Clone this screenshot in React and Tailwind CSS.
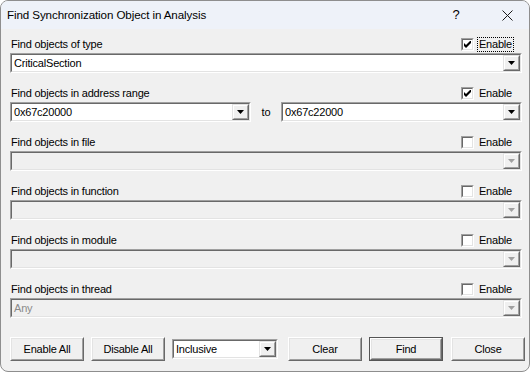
import React from 'react';

const FONT = { fontFamily: '"Liberation Sans", Arial, sans-serif' };

const Arrow = ({ disabled }) => (
  <svg width="7" height="4" viewBox="0 0 7 4">
    <path d="M0 0h7L3.5 4z" fill={disabled ? '#a0a0a0' : '#000'} />
  </svg>
);

// sunken 3D field with a raised drop button on the right
const Combo = ({ value, disabled, className = '' }) => (
  <div className={`flex h-[20px] border-t border-l border-t-[#a0a0a0] border-l-[#a0a0a0] border-b border-r border-b-white border-r-white ${className}`}>
    <div
      className={`flex flex-1 border-t border-l border-t-[#696969] border-l-[#696969] border-b border-r border-b-[#e3e3e3] border-r-[#e3e3e3] ${
        disabled ? 'bg-[#f0f0f0]' : 'bg-white'
      }`}
    >
      <div className={`flex-1 flex items-center pl-[2px] text-[11px] tracking-[-0.2px] ${disabled ? 'text-[#8a8a8a]' : 'text-black'}`}>
        {value}
      </div>
      <div className="w-[17px] flex border-t border-l border-t-[#e3e3e3] border-l-[#e3e3e3] border-b border-r border-b-[#696969] border-r-[#696969]">
        <div className="flex-1 flex items-center justify-center bg-[#f0f0f0] border-t border-l border-t-white border-l-white border-b border-r border-b-[#a0a0a0] border-r-[#a0a0a0]">
          <Arrow disabled={disabled} />
        </div>
      </div>
    </div>
  </div>
);

const Check = ({ checked }) => (
  <div className="w-[13px] h-[13px] flex border-t border-l border-t-[#a0a0a0] border-l-[#a0a0a0] border-b border-r border-b-white border-r-white">
    <div className="flex-1 flex items-center justify-center bg-white border-t border-l border-t-[#696969] border-l-[#696969] border-b border-r border-b-[#e3e3e3] border-r-[#e3e3e3]">
      {checked && (
        <svg width="7" height="7" viewBox="0 0 7 7">
          <path d="M0 2v3l2 2 5-5V-1L2 4z" fill="#000" />
        </svg>
      )}
    </div>
  </div>
);

const Section = ({ label, checked, focused, first, children }) => (
  <div className={first ? 'mt-[7px]' : 'mt-[12px]'}>
    <div className="h-[16px] flex items-center w-[512px]">
      <span className="flex-1 text-[11px] tracking-[-0.2px] pl-[1px]">{label}</span>
      <Check checked={checked} />
      <span
        className={`ml-[3px] mr-[8px] px-[1px] text-[11px] tracking-[-0.2px] leading-[13px] border border-dotted ${
          focused ? 'border-black' : 'border-transparent'
        }`}
      >
        Enable
      </span>
    </div>
    <div className="mt-[1px]">{children}</div>
  </div>
);

const Button = ({ children, isDefault, className = '' }) => (
  <div className={`h-[24px] flex ${isDefault ? 'border border-[#555555]' : ''} ${className}`}>
    <div className="flex-1 flex border-t border-l border-t-white border-l-white border-b border-r border-b-[#696969] border-r-[#696969]">
      <div className="flex-1 flex items-center justify-center bg-[#f0f0f0] text-[11px] tracking-[-0.2px] border-t border-l border-t-[#e3e3e3] border-l-[#e3e3e3] border-b border-r border-b-[#a0a0a0] border-r-[#a0a0a0]">
        {children}
      </div>
    </div>
  </div>
);

export default function App() {
  return (
    <div style={FONT} className="w-[530px] h-[372px] flex flex-col bg-[#f0f0f0] border border-[#8e8e8e] rounded-[8px] overflow-hidden text-black">
      <div className="h-[28px] shrink-0 flex items-center bg-[#eef2f9]">
        <span className="pl-[6px] flex-1 text-[11.6px] tracking-[-0.1px]">Find Synchronization Object in Analysis</span>
        <span className="text-[13px] w-[12px] text-center">?</span>
        <div className="ml-[40px] mr-[16px] w-[11px] h-[11px]">
          <svg width="11" height="11" viewBox="0 0 11 11">
            <path d="M0.5 0.5l10 10M10.5 0.5l-10 10" stroke="#1a1a1a" strokeWidth="1" />
          </svg>
        </div>
      </div>

      <div className="flex-1 flex flex-col pl-[9px]">
        <Section first label="Find objects of type" checked focused>
          <Combo value="CriticalSection" className="w-[512px]" />
        </Section>

        <Section label="Find objects in address range" checked>
          <div className="flex items-center w-[512px]">
            <Combo value="0x67c20000" className="w-[241px]" />
            <span className="w-[30px] text-center text-[11px]">to</span>
            <Combo value="0x67c22000" className="w-[241px]" />
          </div>
        </Section>

        <Section label="Find objects in file">
          <Combo disabled className="w-[512px]" />
        </Section>

        <Section label="Find objects in function">
          <Combo disabled className="w-[512px]" />
        </Section>

        <Section label="Find objects in module">
          <Combo disabled className="w-[512px]" />
        </Section>

        <Section label="Find objects in thread">
          <Combo disabled value="Any" className="w-[512px]" />
        </Section>

        <div className="mt-[19px] flex items-center">
          <Button className="w-[74px]">Enable All</Button>
          <Button className="w-[74px] ml-[7px]">Disable All</Button>
          <Combo value="Inclusive" className="w-[106px] ml-[7px]" />
          <Button className="w-[74px] ml-[10px]">Clear</Button>
          <Button isDefault className="w-[74px] ml-[7px]">Find</Button>
          <Button className="w-[74px] ml-[8px]">Close</Button>
        </div>
      </div>
    </div>
  );
}
